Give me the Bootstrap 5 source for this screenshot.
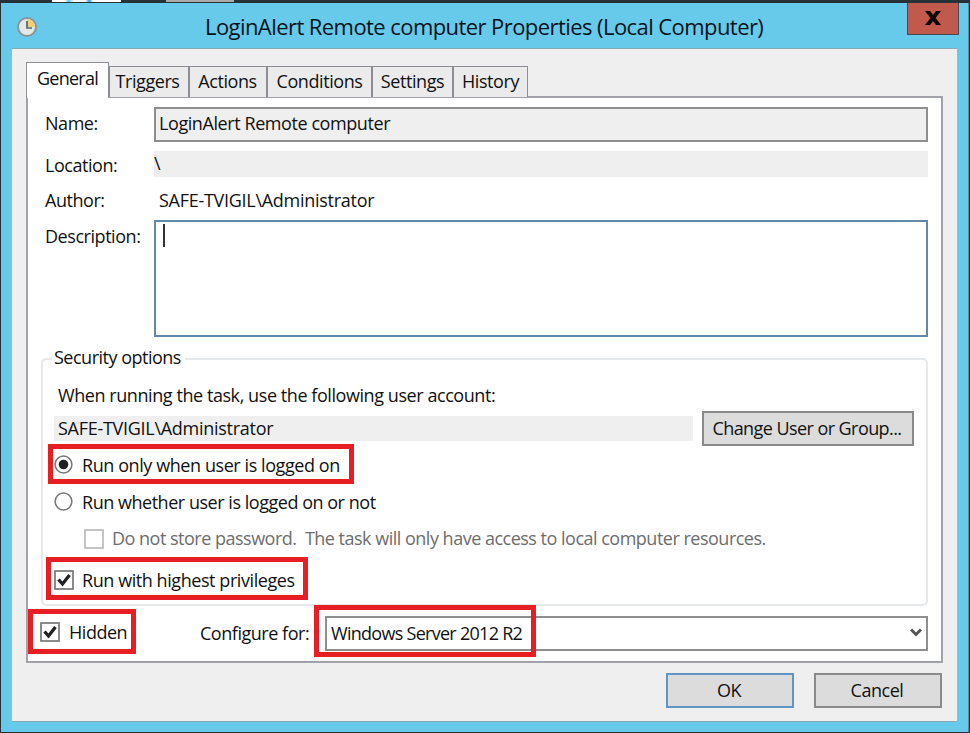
<!DOCTYPE html>
<html lang="en">
<head>
<meta charset="utf-8">
<title>LoginAlert Remote computer Properties</title>
<link href="https://cdn.jsdelivr.net/npm/bootstrap@5.3.0/dist/css/bootstrap.min.css" rel="stylesheet">
<style>
body{width:970px;height:733px;overflow:hidden;background:#263238;font-family:"Open Sans","Noto Sans",sans-serif;font-size:18px;line-height:24px;color:#111;letter-spacing:-.47px;padding:3px 1px 1px 1px}
.desk-strip{left:52px;top:0;width:69px;height:2px;background:linear-gradient(90deg,#fff 18%,#6cc5ea 24%,#fff 32%,#fff 48%,#3f9fd5 54%,#fff 60%)}
.desk-strip2{left:166px;top:0;width:68px;height:2px;background:#aaa}
.win{height:729px;width:968px;background:#67caea;border-right:1px solid #4d8ea4}
.titlebar{height:45px}
.titlebar h1{font-size:22px;line-height:30px;letter-spacing:-.57px;font-weight:400;color:#06121a;margin:8px 0 0 167px}
.clock{margin:13px 0 0 15px}
.close-btn{width:52px;height:32px;background:#c1594d;border:1px solid #454b55;border-top:0;margin-right:9px}
.client{margin:0 11px 0 11px;height:674px;background:#efefef;border-top:1px solid #8aa9b2;border-bottom:1px solid #8aa9b2;padding:13px 14px 0}
.tabs{height:35px;margin-bottom:-1px;position:relative}
.tab-x{height:31px;border:1px solid #8c8d95;background:#ebebeb;line-height:29px;text-align:center;border-bottom-width:0;letter-spacing:-.42px}
.tab-x.on{height:36px;background:#fff;line-height:31px;align-self:flex-start;border-bottom:0;letter-spacing:-.72px}
.pane{height:567px;background:#fff;border:2px solid #a2a3a9;padding:9px 13px 0 13px}
.lbl{width:113px;padding-left:4px;letter-spacing:-.45px}
.box{border:2px solid #8e8e8e}
.ro{background:#efefef}
.acct{letter-spacing:-.28px}
.combo{letter-spacing:-.72px}
.grp{height:248px;border:2px solid #e6e9eb;border-radius:5px;margin-top:21px;padding:0 11px}
.grp .leg{background:#fff;margin-top:-15px;padding:0 4px 0 2px;width:max-content;margin-left:-2px;letter-spacing:-.5px}
.btn-x{height:35px;background:#dcdcdc;border:2px solid #8a8a8a;border-radius:0;display:flex;align-items:center;justify-content:center;padding:0 2px 2px 0}
.opt{margin-top:-2px}
.hl{position:absolute;border:5px solid #e81e25}
svg{display:block;flex:none}
</style>
</head>
<body>
<div class="position-absolute desk-strip"></div><div class="position-absolute desk-strip2"></div>
<div class="win">
  <header class="titlebar d-flex align-items-start">
    <svg class="clock" width="22" height="22" viewBox="0 0 22 22"><circle cx="11" cy="11" r="9" fill="#e4e8e6" stroke="#8b9599" stroke-width="2"/><path d="M11 3a8 8 0 0 1 8 8h-8z" fill="#f2cf78"/><path d="M11 5v7h5" fill="none" stroke="#596468" stroke-width="1.7"/></svg>
    <h1 class="text-nowrap">LoginAlert Remote computer Properties (Local Computer)</h1>
    <div class="close-btn ms-auto d-flex justify-content-center"><svg width="18" height="30" viewBox="0 0 18 30"><path d="M1 8h5l3 4 3-4h5l-5.500 7 5.500 7h-5l-3-4-3 4H1l5.500-7z" fill="#0c0606"/></svg></div>
  </header>
  <main class="client">
    <nav class="tabs d-flex align-items-end">
      <div class="tab-x on" style="width:83px">General</div>
      <div class="tab-x" style="width:80px;padding-right:3px">Triggers</div>
      <div class="tab-x" style="width:78px;padding-right:1px">Actions</div>
      <div class="tab-x" style="width:105px">Conditions</div>
      <div class="tab-x" style="width:81px">Settings</div>
      <div class="tab-x" style="width:75px">History</div>
    </nav>
    <section class="pane">
      <div class="d-flex" style="height:35px"><div class="lbl pt-1">Name:</div><div class="box ro flex-grow-1" style="padding:2px 3px;letter-spacing:-.42px">LoginAlert Remote computer</div></div>
      <div class="d-flex" style="height:26px;margin-top:9px"><div class="lbl" style="padding-top:2px">Location:</div><div class="ro flex-grow-1">\</div></div>
      <div class="d-flex" style="height:24px;margin-top:11px"><div class="lbl">Author:</div><div class="acct" style="padding-left:5px">SAFE-TVIGIL\Administrator</div></div>
      <div class="d-flex" style="height:117px;margin-top:8px"><div class="lbl pt-1">Description:</div><div class="box flex-grow-1" style="border-color:#6488ab;padding:2px 7px"><div style="width:2px;height:23px;background:#333"></div></div></div>
      <div class="grp">
        <div class="leg">Security options</div>
        <div style="margin:14px 0 0 4px;letter-spacing:-.43px">When running the task, use the following user account:</div>
        <div class="d-flex align-items-center" style="margin-top:4px"><div class="ro acct" style="width:639px;height:25px;padding-left:4px;line-height:24px">SAFE-TVIGIL\Administrator</div><div class="btn-x" style="width:212px;margin-left:9px;letter-spacing:-.57px">Change User or Group...</div></div>
        <div class="d-flex align-items-center" style="margin-top:8px;height:22px"><svg width="19" height="20" viewBox="0 0 19 20"><circle cx="9.500" cy="9.500" r="8.400" fill="#fff" stroke="#777" stroke-width="1.500"/><circle cx="9.500" cy="9.500" r="4.800" fill="#222"/></svg><span style="margin-left:9px;letter-spacing:-.42px">Run only when user is logged on</span></div>
        <div class="d-flex align-items-center" style="margin-top:15px;height:22px"><svg width="19" height="20" viewBox="0 0 19 20"><circle cx="9.500" cy="9.500" r="8.400" fill="#fff" stroke="#777" stroke-width="1.500"/></svg><span style="margin-left:9px">Run whether user is logged on or not</span></div>
        <div class="d-flex align-items-center" style="margin:15px 0 0 30px;height:22px;color:#6d6d6d;letter-spacing:-.5px"><svg width="20" height="20"><rect x="1" y="1" width="18" height="18" fill="#fff" stroke="#bbb" stroke-width="1.700"/></svg><span class="opt" style="margin-left:8px">Do not store password.&nbsp; The task will only have access to local computer resources.</span></div>
        <div class="d-flex align-items-center" style="margin-top:19px;height:22px"><svg width="20" height="20"><rect x="1" y="1" width="18" height="18" fill="#fff" stroke="#777" stroke-width="1.700"/><path d="M4.500 9.500l4 4.500 7-9" fill="none" stroke="#222" stroke-width="3.300"/></svg><span style="margin-left:8px;letter-spacing:-.43px">Run with highest privileges</span></div>
      </div>
      <div class="d-flex align-items-center" style="margin-top:10px;height:35px"><svg width="20" height="20" style="margin:-4px 0 0 -1px"><rect x="1" y="1" width="18" height="18" fill="#fff" stroke="#777" stroke-width="1.700"/><path d="M4.500 9.500l4 4.500 7-9" fill="none" stroke="#222" stroke-width="3.300"/></svg><span style="margin:-4px 0 0 9px;width:131px">Hidden</span><span style="width:125px;margin-top:-1px">Configure for:</span>
        <div class="box flex-grow-1 d-flex align-items-center justify-content-between" style="height:35px;padding:0 4px 1px 4px"><span class="combo">Windows Server 2012 R2</span><svg width="12" height="10" viewBox="0 0 12 10"><path d="M1 1.500l5 5 5-5" fill="none" stroke="#555" stroke-width="3"/></svg></div></div>
    </section>
    <footer class="d-flex justify-content-end" style="padding-top:10px;gap:20px;margin-right:1px"><div class="btn-x" style="width:128px;border-color:#5f95c2">OK</div><div class="btn-x" style="width:128px">Cancel</div></footer>
  </main>
</div>
<div class="hl" style="left:48px;top:444px;width:306px;height:40px"></div>
<div class="hl" style="left:46px;top:557px;width:262px;height:43px"></div>
<div class="hl" style="left:28px;top:609px;width:108px;height:45px"></div>
<div class="hl" style="left:314px;top:605px;width:222px;height:52px"></div>
<script src="https://cdn.jsdelivr.net/npm/bootstrap@5.3.0/dist/js/bootstrap.bundle.min.js"></script>
</body>
</html>
